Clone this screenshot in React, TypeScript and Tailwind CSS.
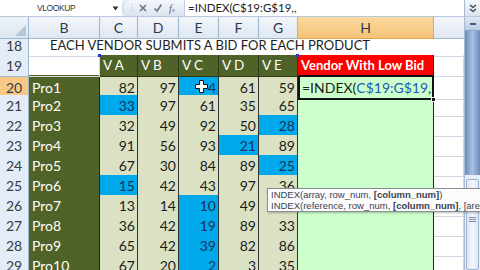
import React from "react";

const ROW = "grid grid-cols-[29px_71px_38px_41px_40px_40px_39px_136px_30px]";

type R = { n: number; p: string; v: (number | string)[]; b: number };
const data: R[] = [
  { n: 20, p: "Pro1", v: [82, 97, "4", 61, 59], b: 2 },
  { n: 21, p: "Pro2", v: [33, 97, 61, 35, 65], b: 0 },
  { n: 22, p: "Pro3", v: [32, 49, 92, 50, 28], b: 4 },
  { n: 23, p: "Pro4", v: [91, 56, 93, 21, 89], b: 3 },
  { n: 24, p: "Pro5", v: [67, 30, 84, 89, 25], b: 4 },
  { n: 25, p: "Pro6", v: [15, 42, 43, 97, 36], b: 0 },
  { n: 26, p: "Pro7", v: [13, 14, 10, 49, 51], b: 2 },
  { n: 27, p: "Pro8", v: [36, 42, 19, 89, 33], b: 2 },
  { n: 28, p: "Pro9", v: [65, 42, 39, 82, 86], b: 2 },
  { n: 29, p: "Pro10", v: [67, 20, 2, 3, 35], b: 2 },
];

function RowNum({ n, active }: { n: number; active?: boolean }) {
  return (
    <div
      className={
        "flex items-center justify-center border-r border-b border-[#9eb6ce] text-[14px] text-[#333c48] " +
        (active ? "bg-[#f8c985]" : "bg-[#e4ecf7]")
      }
    >
      {n}
    </div>
  );
}

export default function App() {
  return (
    <div className="relative w-[480px] h-[270px] overflow-hidden bg-white font-['Lato',sans-serif] select-none">
      {/* Formula bar */}
      <div className="flex h-[17px] border-b border-[#b8c9dd] bg-[#e7eef7]">
        <div className="w-[108px] h-[16px] bg-white flex items-center pl-[37px] font-['Liberation_Sans',sans-serif] text-[8.5px] tracking-[-0.4px] text-[#333]">
          VLOOKUP
        </div>
        <div className="w-[14px] h-[16px] bg-white flex items-center justify-center">
          <svg width="7" height="5" viewBox="0 0 7 5">
            <path d="M0.5 0.5 L6.5 0.5 L3.5 4.5 Z" fill="#333" />
          </svg>
        </div>
        <div className="w-[62px] h-[16px] flex items-center relative bg-gradient-to-b from-[#f4f7fb] to-[#dbe4ef] rounded-l-full border-l border-[#c3d0e0]">
          <span className="absolute left-[8px] top-[3px] text-[7px] text-[#9aa8b9]">⁞</span>
          <svg className="absolute left-[15px] top-[3px]" width="10" height="10" viewBox="0 0 10 10">
            <path d="M2 2 L8 8 M8 2 L2 8" stroke="#6a7380" strokeWidth="1.6" />
          </svg>
          <svg className="absolute left-[30px] top-[3px]" width="10" height="10" viewBox="0 0 10 10">
            <path d="M1.5 5.5 L4 8 L8.5 1.5" stroke="#6a7380" strokeWidth="1.6" fill="none" />
          </svg>
          <span className="absolute left-[46px] top-[1px] font-['Liberation_Serif',serif] italic text-[10px] text-[#5d6570]">
            f<span className="text-[7px]">x</span>
          </span>
        </div>
        <div className="flex-1 h-[16px] bg-white border-l border-[#c3d0e0] flex items-center pl-[3px] text-[11.5px] text-[#222]">
          =INDEX(C$19:G$19,,
        </div>
        <div className="w-[16px] h-[16px] bg-gradient-to-b from-[#f4f7fb] to-[#dbe4ef] border-l border-[#a9bbd3] flex items-center justify-center">
          <svg width="8" height="9" viewBox="0 0 8 9">
            <path d="M1 1 L4 3.5 L7 1 M1 5 L4 7.5 L7 5" stroke="#2d3a4b" strokeWidth="1.2" fill="none" />
          </svg>
        </div>
      </div>

      <div className="flex">
        {/* Sheet */}
        <div className="w-[464px]">
          {/* Column header */}
          <div className={ROW + " h-[18px] text-[14px] text-[#2c3a4d]"}>
            <div className="relative bg-gradient-to-b from-[#eef3f9] to-[#dde6f0] border-r border-b border-[#9eb6ce]">
              <svg className="absolute right-[2px] bottom-[2px]" width="11" height="11" viewBox="0 0 11 11">
                <path d="M11 0 L11 11 L0 11 Z" fill="#b6c6d9" />
              </svg>
            </div>
            {["B", "C", "D", "E", "F", "G"].map((c) => (
              <div
                key={c}
                className="flex items-center justify-center bg-gradient-to-b from-[#f3f6fa] to-[#dfe7f1] border-r border-b border-[#9eb6ce]"
              >
                {c}
              </div>
            ))}
            <div className="flex items-center justify-center bg-gradient-to-b from-[#fbd9a0] to-[#f5c276] border-r border-b border-[#e1a552]">
              H
            </div>
            <div className="bg-gradient-to-b from-[#f3f6fa] to-[#dfe7f1] border-b border-[#9eb6ce]" />
          </div>

          {/* Row 18 */}
          <div className={ROW + " h-[20px]"}>
            <RowNum n={18} />
            <div className="col-span-8 flex items-center pl-[21px] border-b border-[#d0d7e5] text-[13px] text-[#1c1c1c] whitespace-nowrap">
              EACH VENDOR SUBMITS A BID FOR EACH PRODUCT
            </div>
          </div>

          {/* Row 19 */}
          <div className={ROW + " h-[20px] relative"}>
            <RowNum n={19} />
            <div className="border-r border-b border-[#d0d7e5]" />
            {["V A", "V B", "V C", "V D", "V E"].map((t) => (
              <div
                key={t}
                className="flex items-center pl-[3px] bg-[#4f6228] text-white text-[13.5px] border-r border-b border-[#2f3a17] whitespace-pre"
              >
                {t}
              </div>
            ))}
            <div className="flex items-center pl-[3px] bg-[#ff0000] text-white font-bold text-[13px] border-r border-b border-[#222]">
              Vendor With Low Bid
            </div>
            <div className="border-b border-r border-[#d0d7e5]" />
            <div className="absolute left-[98px] top-[-1px] w-[3px] h-[3px] bg-[#2a36c9]" />
            <div className="absolute left-[296px] top-[-1px] w-[3px] h-[3px] bg-[#2a36c9]" />
          </div>

          {/* Data rows */}
          {data.map((r, ri) => (
            <div key={r.n} className={ROW + " h-[20px]"}>
              <RowNum n={r.n} active={ri === 0} />
              <div className="flex items-center pl-[3px] bg-[#4f6228] text-white text-[14px] border-r border-b border-[#1f2610]">
                {r.p}
              </div>
              {r.v.map((v, i) => (
                <div
                  key={i}
                  className={
                    "flex items-center justify-end pr-[2px] text-[14px] border-r border-b border-[#333] " +
                    (i === r.b ? "bg-[#00a9ea] text-[#17335c]" : "bg-[#dbe2c4] text-[#1c1c1c]")
                  }
                >
                  {v}
                </div>
              ))}
              {ri === 0 ? (
                <div className="relative flex items-center pl-[2px] bg-[#ccffcc] text-[14px] text-[#1c1c1c] border-2 border-[#111] whitespace-nowrap">
                  =INDEX(<span className="text-[#1c58b8]">C$19:G$19</span>,,
                  <div className="absolute right-[-4px] bottom-[-4px] w-[5px] h-[5px] bg-[#111] border border-white" />
                </div>
              ) : (
                <div className="bg-[#ccffcc] border-r border-b border-[#222]" />
              )}
              <div className="border-r border-b border-[#d0d7e5]" />
            </div>
          ))}
        </div>

        {/* Vertical scrollbar */}
        <div className="w-[16px] h-[253px] flex flex-col bg-[#e9eff7] border-l border-[#a9bbd3]">
          <div className="h-[14px] flex items-center justify-center bg-gradient-to-b from-[#dfe8f3] to-[#b9cbe3] border-b border-[#8aa4c8]">
            <div className="w-[6px] h-[2px] bg-[#4a5b74]" />
          </div>
          <div className="h-[144px] bg-gradient-to-r from-[#6c8cbd] via-[#a8c0e2] to-[#6c8cbd]" />
          <div className="h-[4px]" />
          <div className="flex-1 mx-[1px] bg-gradient-to-r from-[#dfe7f2] via-[#f3f6fa] to-[#dfe7f2] border border-[#9fb3cf] rounded-[2px] flex flex-col items-center pt-[37px] gap-[1px]">
            <div className="w-[7px] h-[1px] bg-[#7c8ea8]" />
            <div className="w-[7px] h-[1px] bg-[#7c8ea8]" />
            <div className="w-[7px] h-[1px] bg-[#7c8ea8]" />
          </div>
        </div>
      </div>

      {/* Cursor over E20 */}
      <svg className="absolute left-[195px] top-[80px]" width="13" height="13" viewBox="0 0 13 13">
        <path
          d="M4.5 0.5 H8.5 V4.5 H12.5 V8.5 H8.5 V12.5 H4.5 V8.5 H0.5 V4.5 H4.5 Z"
          fill="#fff"
          stroke="#111"
          strokeWidth="1"
        />
      </svg>

      {/* Tooltip */}
      <div className="absolute left-[267px] top-[188px] w-[230px] h-[24px] bg-[#fcfcfd] border border-[#8b8f95] shadow-[1px_1px_2px_rgba(0,0,0,0.25)] px-[3px] pt-[0px] font-['Liberation_Sans',sans-serif] text-[9.5px] leading-[11px] text-[#3a4250] whitespace-nowrap">
        <div>
          INDEX(array, row_num, <b>[column_num]</b>)
        </div>
        <div>
          INDEX(reference, row_num, <b>[column_num]</b>, [area_num])
        </div>
      </div>
    </div>
  );
}
